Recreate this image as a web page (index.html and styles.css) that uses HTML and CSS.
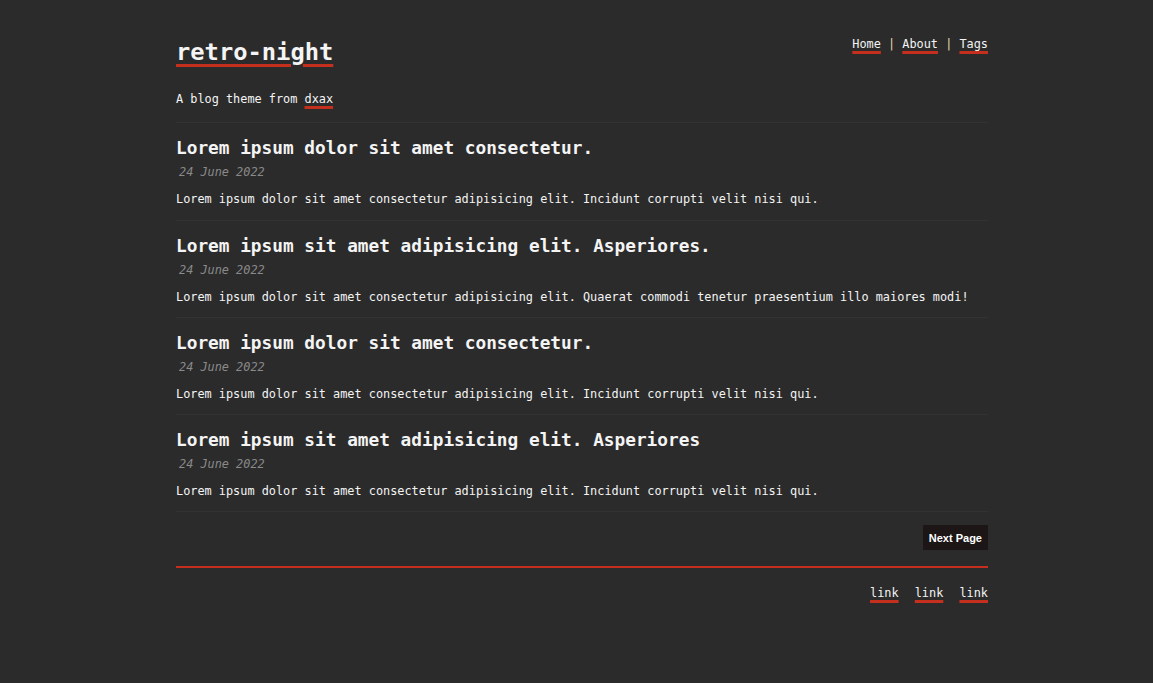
FILE: index.html
```html
<!DOCTYPE html>
<html lang="en">
<head>
<meta charset="utf-8">
<title>retro-night</title>
<link rel="stylesheet" href="styles.css">
</head>
<body>
<div class="page">
  <header class="site-header">
    <div class="brand">
      <h1 class="logo"><a href="#">retro-night</a></h1>
      <p class="tagline">A blog theme from <a href="#">dxax</a></p>
    </div>
    <nav class="nav"><a href="#">Home</a> <span class="sep">|</span> <a href="#">About</a> <span class="sep">|</span> <a href="#">Tags</a></nav>
  </header>

  <main class="posts">
    <article class="post">
      <h2 class="post-title">Lorem ipsum dolor sit amet consectetur.</h2>
      <div class="post-date">24 June 2022</div>
      <p class="post-excerpt">Lorem ipsum dolor sit amet consectetur adipisicing elit. Incidunt corrupti velit nisi qui.</p>
    </article>
    <article class="post">
      <h2 class="post-title">Lorem ipsum sit amet adipisicing elit. Asperiores.</h2>
      <div class="post-date">24 June 2022</div>
      <p class="post-excerpt">Lorem ipsum dolor sit amet consectetur adipisicing elit. Quaerat commodi tenetur praesentium illo maiores modi!</p>
    </article>
    <article class="post">
      <h2 class="post-title">Lorem ipsum dolor sit amet consectetur.</h2>
      <div class="post-date">24 June 2022</div>
      <p class="post-excerpt">Lorem ipsum dolor sit amet consectetur adipisicing elit. Incidunt corrupti velit nisi qui.</p>
    </article>
    <article class="post">
      <h2 class="post-title">Lorem ipsum sit amet adipisicing elit. Asperiores</h2>
      <div class="post-date">24 June 2022</div>
      <p class="post-excerpt">Lorem ipsum dolor sit amet consectetur adipisicing elit. Incidunt corrupti velit nisi qui.</p>
    </article>
  </main>

  <div class="pager">
    <a class="next" href="#">Next Page</a>
  </div>

  <footer class="site-footer"><a href="#">link</a> <a href="#">link</a> <a href="#">link</a></footer>
</div>
</body>
</html>
```

FILE: styles.css
```css
html, body {
  margin: 0;
  padding: 0;
  background: #2b2b2b;
}

body {
  color: #f4f4f4;
  font-family: "DejaVu Sans Mono", "Liberation Mono", monospace;
  font-size: 11.86px;
  line-height: 16px;
}

a {
  color: #f4f4f4;
  text-decoration: underline;
  text-decoration-color: #c4301d;
  text-decoration-thickness: 3px;
  text-underline-offset: 3px;
}

.page {
  width: 812px;
  margin-left: 176px;
  padding: 37px 0 40px;
}

.site-header {
  display: flex;
  justify-content: space-between;
  align-items: flex-start;
  padding-bottom: 15px;
  border-bottom: 1px solid #323232;
}

.logo {
  margin: 0;
  font-size: 23.75px;
  line-height: 30px;
  font-weight: bold;
}

.logo a {
  text-underline-offset: 4px;
}

.tagline {
  margin: 24px 0 0;
}

.nav {
  margin-top: -1px;
  white-space: nowrap;
}

.sep {
  color: #e2d8a8;
}

.post {
  padding: 13px 0 12px;
  border-bottom: 1px solid #323232;
}

.post:first-child {
  padding-bottom: 13px;
}

.post-title {
  margin: 0;
  font-size: 17.77px;
  line-height: 24px;
  font-weight: bold;
}

.post-date {
  margin-top: 4px;
  padding-left: 3px;
  color: #8a8a8a;
  font-style: italic;
}

.post-excerpt {
  margin: 11px 0 0;
}

.pager {
  display: flex;
  justify-content: flex-end;
  padding: 13px 0 16px;
  border-bottom: 2px solid #c4301d;
}

.next {
  display: flex;
  align-items: center;
  height: 25px;
  padding: 0 6px;
  background: #1c1616;
  color: #ffffff;
  font-family: "Liberation Sans", Arial, sans-serif;
  font-size: 11px;
  font-weight: bold;
  text-decoration: none;
}

.site-footer {
  text-align: right;
  padding-top: 17px;
}

.site-footer a {
  margin-left: 9px;
}
```
